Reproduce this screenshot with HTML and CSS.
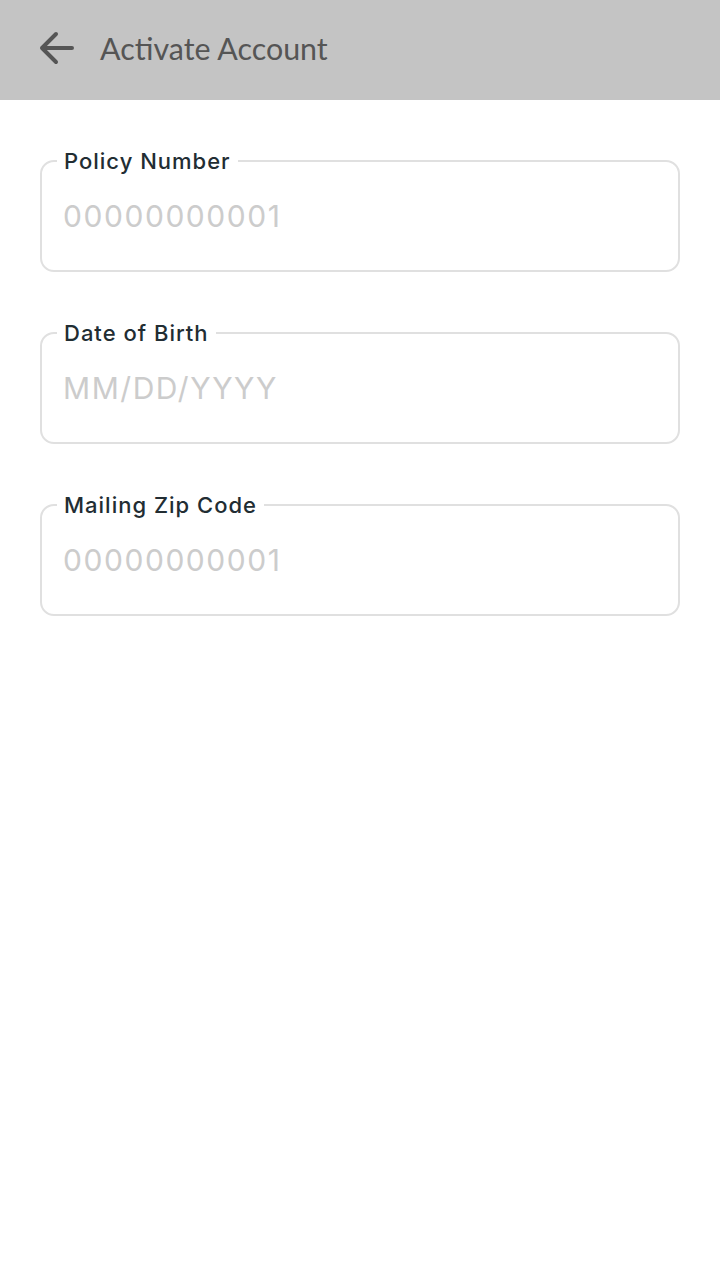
FILE: index.html
```html
<!DOCTYPE html>
<html lang="en">
<head>
<meta charset="utf-8">
<title>Activate Account</title>
<link rel="stylesheet" href="styles.css">
</head>
<body>
<header class="appbar">
  <button class="back" aria-label="Back">
    <svg viewBox="0 0 40 40" width="40" height="40">
      <path d="M36 20 H6 M6 20 L20 6 M6 20 L20 34" fill="none" stroke="#555555" stroke-width="4" stroke-linecap="round" stroke-linejoin="round"/>
    </svg>
  </button>
  <h1 class="title">Activate Account</h1>
</header>
<main class="form">
  <fieldset class="field">
    <legend class="label">Policy Number</legend>
    <input class="input" type="text" placeholder="00000000001">
  </fieldset>
  <fieldset class="field">
    <legend class="label">Date of Birth</legend>
    <input class="input" type="text" placeholder="MM/DD/YYYY">
  </fieldset>
  <fieldset class="field">
    <legend class="label">Mailing Zip Code</legend>
    <input class="input" type="text" placeholder="00000000001">
  </fieldset>
</main>
</body>
</html>
```

FILE: styles.css
```css
html, body {
  margin: 0;
  padding: 0;
  background: #ffffff;
}

body {
  font-family: "Inter", "Noto Sans", sans-serif;
  width: 720px;
  min-height: 1280px;
}

.appbar {
  height: 100px;
  background: #c4c4c4;
  display: flex;
  align-items: center;
  padding-left: 36px;
  padding-bottom: 4px;
  box-sizing: border-box;
}

.back {
  border: none;
  background: transparent;
  padding: 0;
  margin: 0;
  width: 40px;
  height: 40px;
  display: flex;
  align-items: center;
  justify-content: center;
}

.back svg {
  display: block;
}

.title {
  margin: 0 0 0 24px;
  font-family: "Lato", "Open Sans", sans-serif;
  font-weight: 400;
  font-size: 30.4px;
  line-height: 40px;
  color: #555555;
  letter-spacing: 0;
}

.form {
  padding: 48px 40px 0 40px;
  display: flex;
  flex-direction: column;
  gap: 48px;
}

.field {
  margin: 0;
  padding: 0 0 36px 0;
  border: 2px solid #e0e0e0;
  border-radius: 14px;
  min-width: 0;
}

.label {
  margin-left: 15px;
  padding: 0 7px;
  font-size: 22px;
  line-height: 26px;
  letter-spacing: 1px;
  color: #222d33;
  font-weight: 500;
}

.input {
  display: block;
  box-sizing: border-box;
  width: 100%;
  margin-top: 24px;
  height: 36px;
  padding: 0 21px;
  border: none;
  outline: none;
  background: transparent;
  font-family: "Inter", "Noto Sans", sans-serif;
  font-size: 30px;
  line-height: 36px;
  letter-spacing: 1.55px;
  color: #263238;
}

.input::placeholder {
  color: #cccccc;
  opacity: 1;
}
```
